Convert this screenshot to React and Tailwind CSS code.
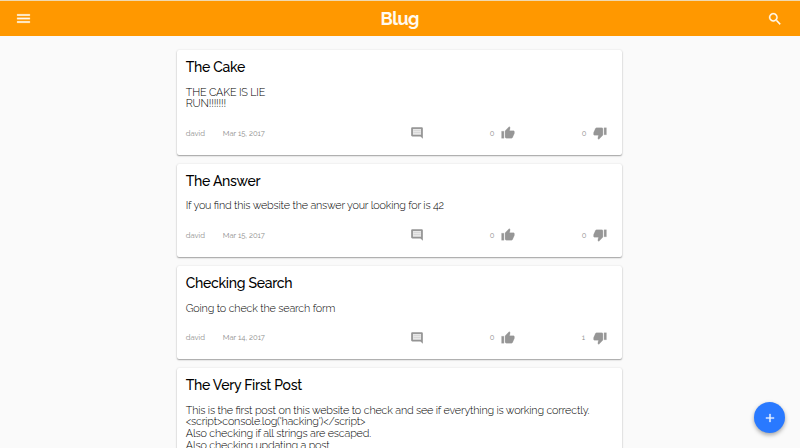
const ICONS = {
  menu: 'M3 18h18v-2H3v2zm0-5h18v-2H3v2zm0-7v2h18V6H3z',
  search:
    'M15.5 14h-.79l-.28-.27C15.41 12.59 16 11.11 16 9.5 16 5.91 13.09 3 9.5 3S3 5.91 3 9.5 5.91 16 9.5 16c1.61 0 3.09-.59 4.23-1.57l.27.28v.79l5 4.99L20.49 19l-4.99-5zm-6 0C7.01 14 5 11.99 5 9.5S7.01 5 9.5 5 14 7.01 14 9.5 11.99 14 9.5 14z',
  up: 'M1 21h4V9H1v12zm22-11c0-1.1-.9-2-2-2h-6.31l.95-4.57.03-.32c0-.41-.17-.79-.44-1.06L14.17 1 7.59 7.59C7.22 7.95 7 8.45 7 9v10c0 1.1.9 2 2 2h9c.83 0 1.54-.5 1.84-1.22l3.02-7.05c.09-.23.14-.47.14-.73v-2z',
  down: 'M15 3H6c-.83 0-1.54.5-1.84 1.22l-3.02 7.05c-.09.23-.14.47-.14.73v2c0 1.1.9 2 2 2h6.31l-.95 4.57-.03.32c0 .41.17.79.44 1.06L9.83 23l6.59-6.59c.36-.36.58-.86.58-1.41V5c0-1.1-.9-2-2-2zm4 0v12h4V3h-4z',
  add: 'M19 13h-6v6h-2v-6H5v-2h6V5h2v6h6v2z',
}

function Icon({ name, className }) {
  return (
    <svg viewBox="0 0 24 24" fill="currentColor" stroke="currentColor" strokeWidth="0.4" className={className}>
      <path d={ICONS[name]} />
    </svg>
  )
}

function CommentIcon() {
  return (
    <svg viewBox="0 0 24 24" className="block size-[14px]">
      <path fill="#949494" d="M22 4c0-1.1-.9-2-2-2H4c-1.1 0-2 .9-2 2v12c0 1.1.9 2 2 2h14l4 4V4z" />
      <path fill="#e8e8e8" d="M5 5h14v10H5z" />
      <path fill="#c8c8c8" d="M6 7.7h12v1H6zm0 3h12v1H6z" />
    </svg>
  )
}

const POSTS = [
  {
    title: 'The Cake',
    lines: ['THE CAKE IS LIE', 'RUN!!!!!!!'],
    date: 'Mar 15, 2017',
    ups: 0,
    downs: 0,
    height: 'h-[105px]',
  },
  {
    title: 'The Answer',
    lines: ['If you find this website the answer your looking for is 42'],
    date: 'Mar 15, 2017',
    ups: 0,
    downs: 0,
    height: 'h-[93.5px]',
  },
  {
    title: 'Checking Search',
    lines: ['Going to check the search form'],
    date: 'Mar 14, 2017',
    ups: 0,
    downs: 1,
    height: 'h-[93.5px]',
  },
  {
    title: 'The Very First Post',
    lines: [
      'This is the first post on this website to check and see if everything is working correctly.',
      "<script>console.log('hacking')</script>",
      'Also checking if all strings are escaped.',
      'Also checking updating a post',
    ],
    date: 'Mar 14, 2017',
    ups: 0,
    downs: 0,
    height: 'h-[128px]',
  },
]

function Post({ post }) {
  return (
    <article
      className={`${post.height} shrink-0 rounded-[2px] bg-white pt-[9px] pl-[8.8px] shadow-[0_1px_1.5px_rgba(0,0,0,0.35),0_0_2px_rgba(0,0,0,0.1)]`}
    >
      <h2 className="h-4 text-[14px] leading-4 font-medium tracking-[-0.28px] whitespace-nowrap text-black">
        {post.title}
      </h2>
      <div className="mt-[11.7px] text-[10.8px] leading-[11.7px] font-light tracking-[-0.18px] text-black [font-feature-settings:'liga']">
        {post.lines.map((text) => (
          <p key={text} className="whitespace-nowrap">
            {text}
          </p>
        ))}
      </div>
      <div className="mt-[16.3px] flex h-[14px] items-center text-[7.6px] leading-[14px] text-[#8c8c8c]">
        <span className="w-[37px] pt-px">david</span>
        <span className="w-[187px] pt-px whitespace-nowrap">{post.date}</span>
        <span className="w-[80px]">
          <CommentIcon />
        </span>
        <span className="flex w-[92px] items-center gap-[6px]">
          <span className="w-[5px] pt-px">{post.ups}</span>
          <Icon name="up" className="size-[14px] text-[#969696]" />
        </span>
        <span className="flex items-center gap-[6px]">
          <span className="w-[5px] pt-px">{post.downs}</span>
          <Icon name="down" className="size-[14px] text-[#969696]" />
        </span>
      </div>
    </article>
  )
}

export default function App() {
  return (
    <div className="relative flex h-[448px] w-[800px] flex-col overflow-hidden bg-[#fafafa] font-[Raleway,Lato,sans-serif]">
      <header className="flex h-9 shrink-0 items-center justify-between border-t border-[#efd9b0] bg-[#ff9800] pr-[16.5px] pl-[15px] text-[#fffaf0]">
        <Icon name="menu" className="size-[17px]" />
        <h1 className="text-[18px] leading-9 font-bold tracking-[-0.5px]">Blug</h1>
        <Icon name="search" className="size-[16px]" />
      </header>
      <main className="mt-[14px] ml-[177px] flex w-[445px] flex-col gap-[8.7px]">
        {POSTS.map((post) => (
          <Post key={post.title} post={post} />
        ))}
      </main>
      <button
        aria-label="Add post"
        className="absolute top-[402px] left-[754px] flex size-[31px] items-center justify-center rounded-full bg-[#2979ff] text-white shadow-[0_2px_4px_rgba(0,0,0,0.35)]"
      >
        <Icon name="add" className="size-[14px]" />
      </button>
    </div>
  )
}
